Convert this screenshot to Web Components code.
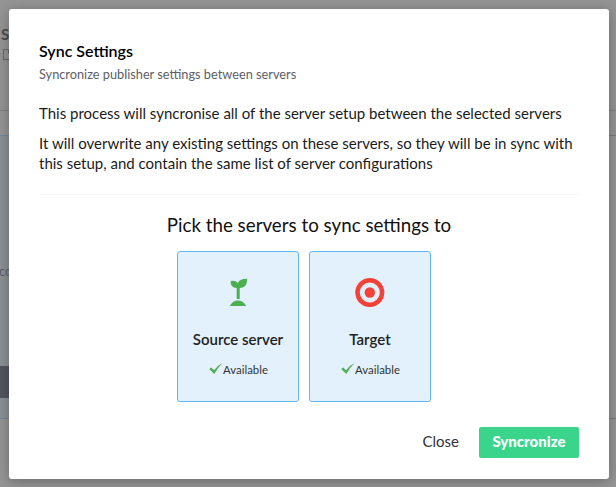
<!DOCTYPE html>
<html lang="en">
<head>
<meta charset="utf-8">
<title>Sync Settings</title>
<style>
html,body{margin:0;height:100%;overflow:hidden}
body{font-family:Lato,"Liberation Sans",sans-serif;font-size:15px;line-height:20px;color:#1b1b1b;font-variant-ligatures:common-ligatures}
</style>
</head>
<body>
<sync-page></sync-page>
<script>
class BaseElement extends HTMLElement {
  constructor() {
    super();
    this.attachShadow({ mode: 'open' }).innerHTML = this.render();
  }
}

customElements.define('page-backdrop', class extends BaseElement {
  render() {
    return `<style>
      :host{position:absolute;inset:0;overflow:hidden;background:#959595;display:block}
      i,b,span,svg{position:absolute;display:block}
      .rule{left:0;right:0;top:110px;height:1px;background:#818181}
      .panel{left:0;width:604px;top:135px;height:282px;background:#8b9195;border:solid #71889a;border-width:1px 0}
      .bar{left:0;width:100px;top:366px;height:32px;background:#555562}
      .tick{left:609px;width:7px;height:1px;background:#7b7b7b}
      b{left:1px;top:24px;font-size:15px;color:#4d4d4d}
      span{left:-1px;top:261px;font-size:13px;color:#60606a}
      svg{left:2px;top:48px}
    </style>
    <b>Se</b>
    <svg width="12" height="13" viewBox="0 0 12 13" fill="none" stroke="#676767"><path d="M1.500 1.500H6.500L10 5V11.500H1.500ZM6.500 1.500V5H10"/></svg>
    <i class="rule"></i><i class="panel"></i><span>co</span><i class="bar"></i>
    <i class="tick" style="top:135px"></i><i class="tick" style="top:418px"></i>`;
  }
});

customElements.define('modal-dialog', class extends BaseElement {
  render() {
    return `<style>
      :host{position:relative;display:flex;flex-direction:column;box-sizing:border-box;width:600px;height:470px;padding:31px 30px 21px;background:#fff;border-radius:3px;box-shadow:0 2px 14px rgba(0,0,0,.3)}
      header{display:flex;flex-direction:column;gap:3px}
      .body{flex:1}
      footer{display:flex;justify-content:flex-end;align-items:center;gap:20px}
    </style>
    <header><slot name="title"></slot><slot name="subtitle"></slot></header>
    <div class="body"><slot></slot></div>
    <footer><slot name="actions"></slot></footer>`;
  }
});

customElements.define('action-button', class extends BaseElement {
  render() {
    return `<style>
      :host{display:block;line-height:29px;height:31px;color:#303033;cursor:pointer}
      :host([primary]){width:100px;text-align:center;background:#3ad48b;color:#fff;font-weight:900;border-radius:2px}
    </style><slot></slot>`;
  }
});

customElements.define('status-badge', class extends BaseElement {
  render() {
    return `<style>
      :host{display:flex;align-items:center;gap:1px;font-size:11.400px;line-height:16px;color:#333}
      svg{display:block;margin-top:-3px}
    </style>
    <svg width="13" height="12" viewBox="0 0 13 12"><path fill="#4caf50" d="M.2 6 2.300 4.400 5 7.300Q8 2.800 12.800.500L13 .8Q8.800 4.500 5.300 11Z"/></svg><slot></slot>`;
  }
});

customElements.define('server-card', class extends BaseElement {
  render() {
    return `<style>
      :host{display:flex;flex-direction:column;align-items:center;box-sizing:border-box;width:122px;height:151px;padding-top:24px;background:#e3f1fd;border:1px solid #64b5f6;border-radius:3px}
      .name{margin-top:19px;font-weight:600;color:#212121}
      .status{margin-top:13px;padding-left:1px}
    </style>
    <slot name="icon"></slot>
    <div class="name"><slot></slot></div>
    <div class="status"><slot name="status"></slot></div>`;
  }
});

customElements.define('sprout-icon', class extends BaseElement {
  render() {
    return `<style>:host,svg{display:block}</style>
    <svg width="34" height="34" viewBox="0 0 34 34" fill="#4caf50">
      <path d="M9.700 5Q14.500 3.800 16.800 7Q19 2.600 26.200 2.800Q26.200 12 18.700 12V23H15.700V12Q9.200 12 9.700 5Z"/>
      <path d="M8.800 30Q12 24.600 17 24.600T25.200 30Z"/>
    </svg>`;
  }
});

customElements.define('target-icon', class extends BaseElement {
  render() {
    return `<style>:host,svg{display:block}</style>
    <svg width="34" height="34" viewBox="0 0 34 34"><circle cx="16.800" cy="16.500" r="12.300" fill="none" stroke="#f44336" stroke-width="4.500"/><circle cx="16.800" cy="16.500" r="5.200" fill="#f44336"/></svg>`;
  }
});

customElements.define('sync-page', class extends BaseElement {
  render() {
    return `<style>
      :host{position:relative;display:block;box-sizing:border-box;width:616px;height:487px;padding:9px 0 0 9px}
      h1{margin:0;font-size:16px;line-height:22px;font-weight:600;color:#000}
      .sub{margin:0;font-size:12.750px;line-height:18px;color:#5d5d66}
      .copy{margin:20px 0 0}
      .copy+.copy{margin-top:10px}
      hr{margin:21px 0 0;border:0;border-top:1px solid #f7f7f7}
      h2{margin:17px 0 13px;text-align:center;font-size:18.750px;line-height:26px;font-weight:400;color:#111}
      .cards{display:flex;justify-content:center;gap:10px;padding-right:10px}
    </style>
    <page-backdrop></page-backdrop>
    <modal-dialog>
      <h1 slot="title">Sync Settings</h1>
      <p class="sub" slot="subtitle">Syncronize publisher settings between servers</p>
      <p class="copy">This process will syncronise all of the server setup between the selected servers</p>
      <p class="copy">It will overwrite any existing settings on these servers, so they will be in sync with this setup, and contain the same list of server configurations</p>
      <hr>
      <h2>Pick the servers to sync settings to</h2>
      <div class="cards">
        <server-card><sprout-icon slot="icon"></sprout-icon>Source server<status-badge slot="status">Available</status-badge></server-card>
        <server-card><target-icon slot="icon"></target-icon>Target<status-badge slot="status">Available</status-badge></server-card>
      </div>
      <action-button slot="actions">Close</action-button>
      <action-button slot="actions" primary>Syncronize</action-button>
    </modal-dialog>`;
  }
});
</script>
</body>
</html>
